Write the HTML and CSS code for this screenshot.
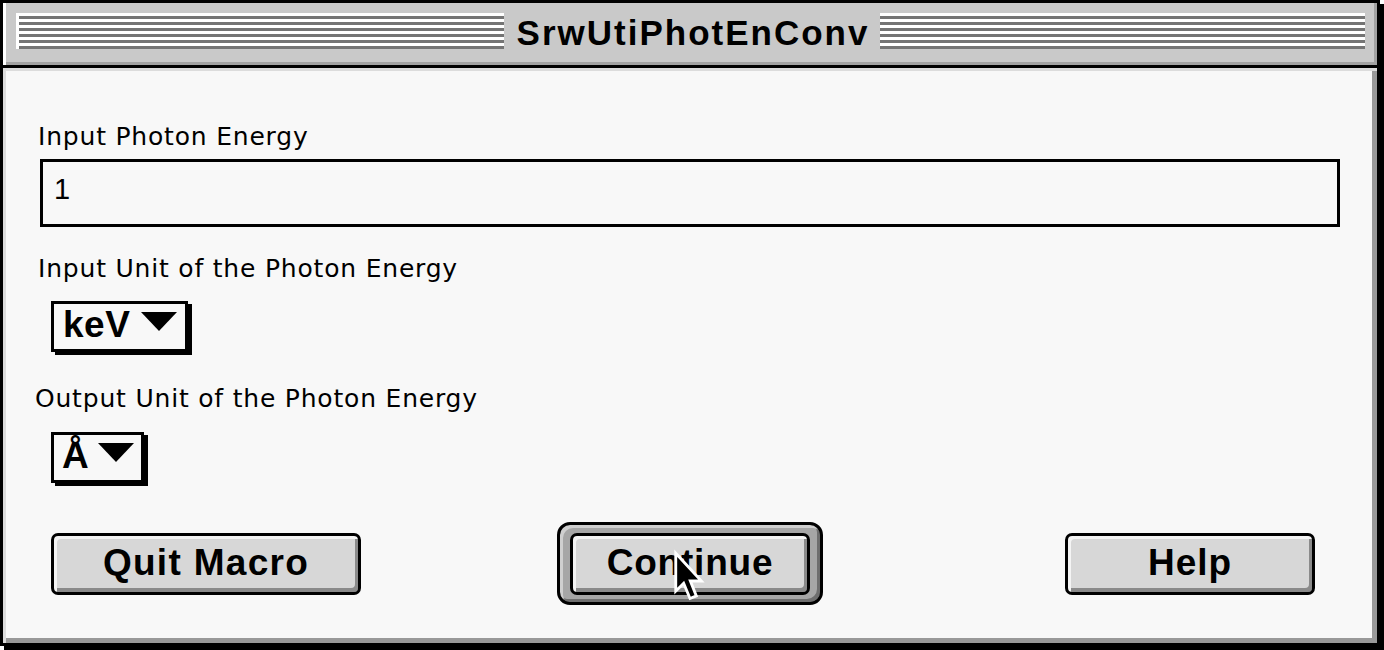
FILE: index.html
```html
<!DOCTYPE html>
<html>
<head>
<meta charset="utf-8">
<title>SrwUtiPhotEnConv</title>
<link rel="stylesheet" href="styles.css">
</head>
<body>
<div class="window">
  <div class="titlebar">
    <div class="stripes left"></div>
    <div class="title">SrwUtiPhotEnConv</div>
    <div class="stripes right"></div>
  </div>
  <div class="content">
    <div class="label">Input Photon Energy</div>
    <div class="field">1</div>
    <div class="label l2">Input Unit of the Photon Energy</div>
    <div class="popup p1"><span class="ptext">keV</span><svg class="tri" width="36" height="19" viewBox="0 0 36 19"><polygon points="0,0 36,0 18,19" fill="#000"/></svg></div>
    <div class="label l3">Output Unit of the Photon Energy</div>
    <div class="popup p2"><span class="ptext">Å</span><svg class="tri" width="36" height="19" viewBox="0 0 36 19"><polygon points="0,0 36,0 18,19" fill="#000"/></svg></div>
    <div class="buttons">
      <div class="btn quit">Quit Macro</div>
      <div class="ring"><div class="btn cont">Continue</div></div>
      <div class="btn help">Help</div>
    </div>
  </div>
  <svg class="cursor" width="38" height="61" viewBox="-1 -1 12 19"><path d="M0.5,0.5 L0.5,12.5 L3,10 L5,14.8 L7,14 L5.1,9.3 L8.6,9.3 Z" fill="#000" stroke="#fff" stroke-width="0.9" stroke-linejoin="miter"/></svg>
</div>
</body>
</html>
```
FILE: styles.css
```css
* { box-sizing: border-box; }
html, body { margin: 0; padding: 0; }
body {
  background: #fff;
  width: 1384px;
  height: 650px;
  overflow: hidden;
  font-family: "DejaVu Sans", sans-serif;
}
.window {
  position: relative;
  width: 1380px;
  height: 646px;
  border: 3px solid #000;
  box-shadow: 4px 4px 0 #000;
  display: flex;
  flex-direction: column;
}
.titlebar {
  height: 65px;
  flex: none;
  background: #c9c9c9;
  border-bottom: 3px solid #000;
  box-shadow: inset 3px 0 0 #fff, inset -3px -3px 0 #a2a2a2;
  display: flex;
  align-items: flex-start;
  padding: 10px 12px 0 13px;
}
.stripes {
  flex: 1;
  height: 36px;
  background: repeating-linear-gradient(to bottom, #fff 0 3px, #747474 3px 6px);
}
.stripes.left { border-left: 3px solid #fff; }
.title {
  font-family: "Liberation Sans", Arial, sans-serif;
  font-weight: bold;
  font-size: 35px;
  line-height: 40px;
  letter-spacing: 2px;
  padding: 0 11px 0 13px;
  color: #000;
}
.content {
  flex: 1;
  background: #f8f8f8;
  box-shadow: inset 3px 3px 0 #dcdcdc, inset -5px -5px 0 #999;
  padding: 54px 0 0 35px;
}
.label {
  font-size: 25px;
  line-height: 30px;
  letter-spacing: 0.8px;
  color: #000;
}
.l2 { margin-top: 27px; }
.l3 { margin-top: 32px; margin-left: -3px; }
.field {
  margin: 7px 0 0 2px;
  width: 1300px;
  height: 68px;
  border: 3px solid #000;
  background: #f8f8f8;
  font-family: "Liberation Sans", Arial, sans-serif;
  font-size: 29px;
  line-height: 54px;
  padding: 0 0 8px 11px;
}
.popup {
  display: flex;
  align-items: center;
  width: max-content;
  height: 51px;
  margin-left: 13px;
  border: 3px solid #000;
  box-shadow: 4px 3px 0 #000;
  background: #f8f8f8;
  font-family: "Liberation Sans", Arial, sans-serif;
  font-weight: bold;
  font-size: 37px;
  letter-spacing: 0.5px;
}
.p1 { margin-top: 17px; padding: 0 8px 4px 9px; }
.p2 { margin-top: 18px; padding: 0 7px 4px 8px; }
.ptext { line-height: 41px; }
.tri { display: block; flex: none; margin-top: -6px; }
.p1 .tri { margin-left: 11px; }
.p2 .tri { margin-left: 9px; }
.buttons {
  display: flex;
  align-items: center;
  margin-top: 39px;
  height: 83px;
}
.btn {
  height: 62px;
  border: 3px solid #000;
  border-radius: 7px;
  background: #d7d7d7;
  box-shadow: inset 3px 3px 0 #f4f4f4, inset -3px -4px 0 #8a8a8a;
  font-family: "Liberation Sans", Arial, sans-serif;
  font-weight: bold;
  font-size: 37px;
  line-height: 54px;
  text-align: center;
  letter-spacing: 1px;
  color: #000;
}
.quit { width: 310px; margin-left: 13px; letter-spacing: 1.3px; }
.ring {
  width: 266px;
  height: 83px;
  margin-left: 196px;
  border: 3px solid #000;
  border-radius: 13px;
  background: #a6a6a6;
  box-shadow: inset 3px 3px 0 #cfcfcf, inset -3px -3px 0 #6e6e6e;
  padding: 8px 10px 9px 10px;
}
.cont { width: 240px; letter-spacing: 0.8px; }
.help { width: 250px; margin-left: 242px; }
.cursor {
  position: absolute;
  left: 668px;
  top: 545px;
}
```
